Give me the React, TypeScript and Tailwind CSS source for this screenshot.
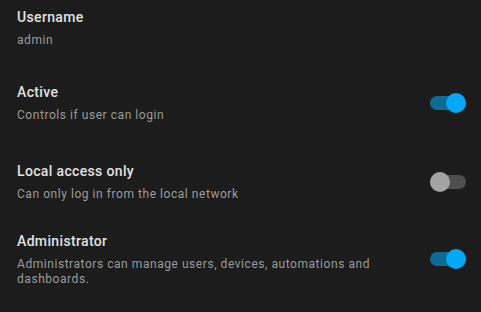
import React from "react";

function Toggle({ on }: { on: boolean }) {
  return (
    <div className="relative w-[36px] h-[20px] shrink-0 flex items-center">
      <div className={`w-[36px] h-[14px] rounded-full ${on ? "bg-[#0f6a93]" : "bg-[#4f4f4f]"}`} />
      <div
        className={`absolute top-0 w-[20px] h-[20px] rounded-full ${on ? "left-[16px] bg-[#03a9f4]" : "left-0 bg-[#a3a3a3]"}`}
      />
    </div>
  );
}

function Text({ title, desc }: { title: string; desc: string }) {
  return (
    <div className="flex-1 min-w-0">
      <div className="text-[14px] leading-[20px] font-medium text-[#e1e1e1] tracking-[0.35px]">{title}</div>
      <div className="mt-[6px] text-[12px] leading-[15px] text-[#9b9b9b] tracking-[0.55px]">{desc}</div>
    </div>
  );
}

export default function App() {
  return (
    <div
      className="w-[481px] h-[312px] bg-[#1c1c1c] pl-[17px] pr-[15px] pt-[7px] overflow-hidden"
      style={{ fontFamily: "Roboto, 'Noto Sans', sans-serif" }}
    >
      <Text title="Username" desc="admin" />
      <div className="mt-[34px] flex items-center gap-4">
        <Text title="Active" desc="Controls if user can login" />
        <Toggle on />
      </div>
      <div className="mt-[38px] flex items-center gap-4">
        <Text title="Local access only" desc="Can only log in from the local network" />
        <Toggle on={false} />
      </div>
      <div className="mt-[29px] flex items-center gap-4">
        <Text
          title="Administrator"
          desc="Administrators can manage users, devices, automations and dashboards."
        />
        <Toggle on />
      </div>
    </div>
  );
}
